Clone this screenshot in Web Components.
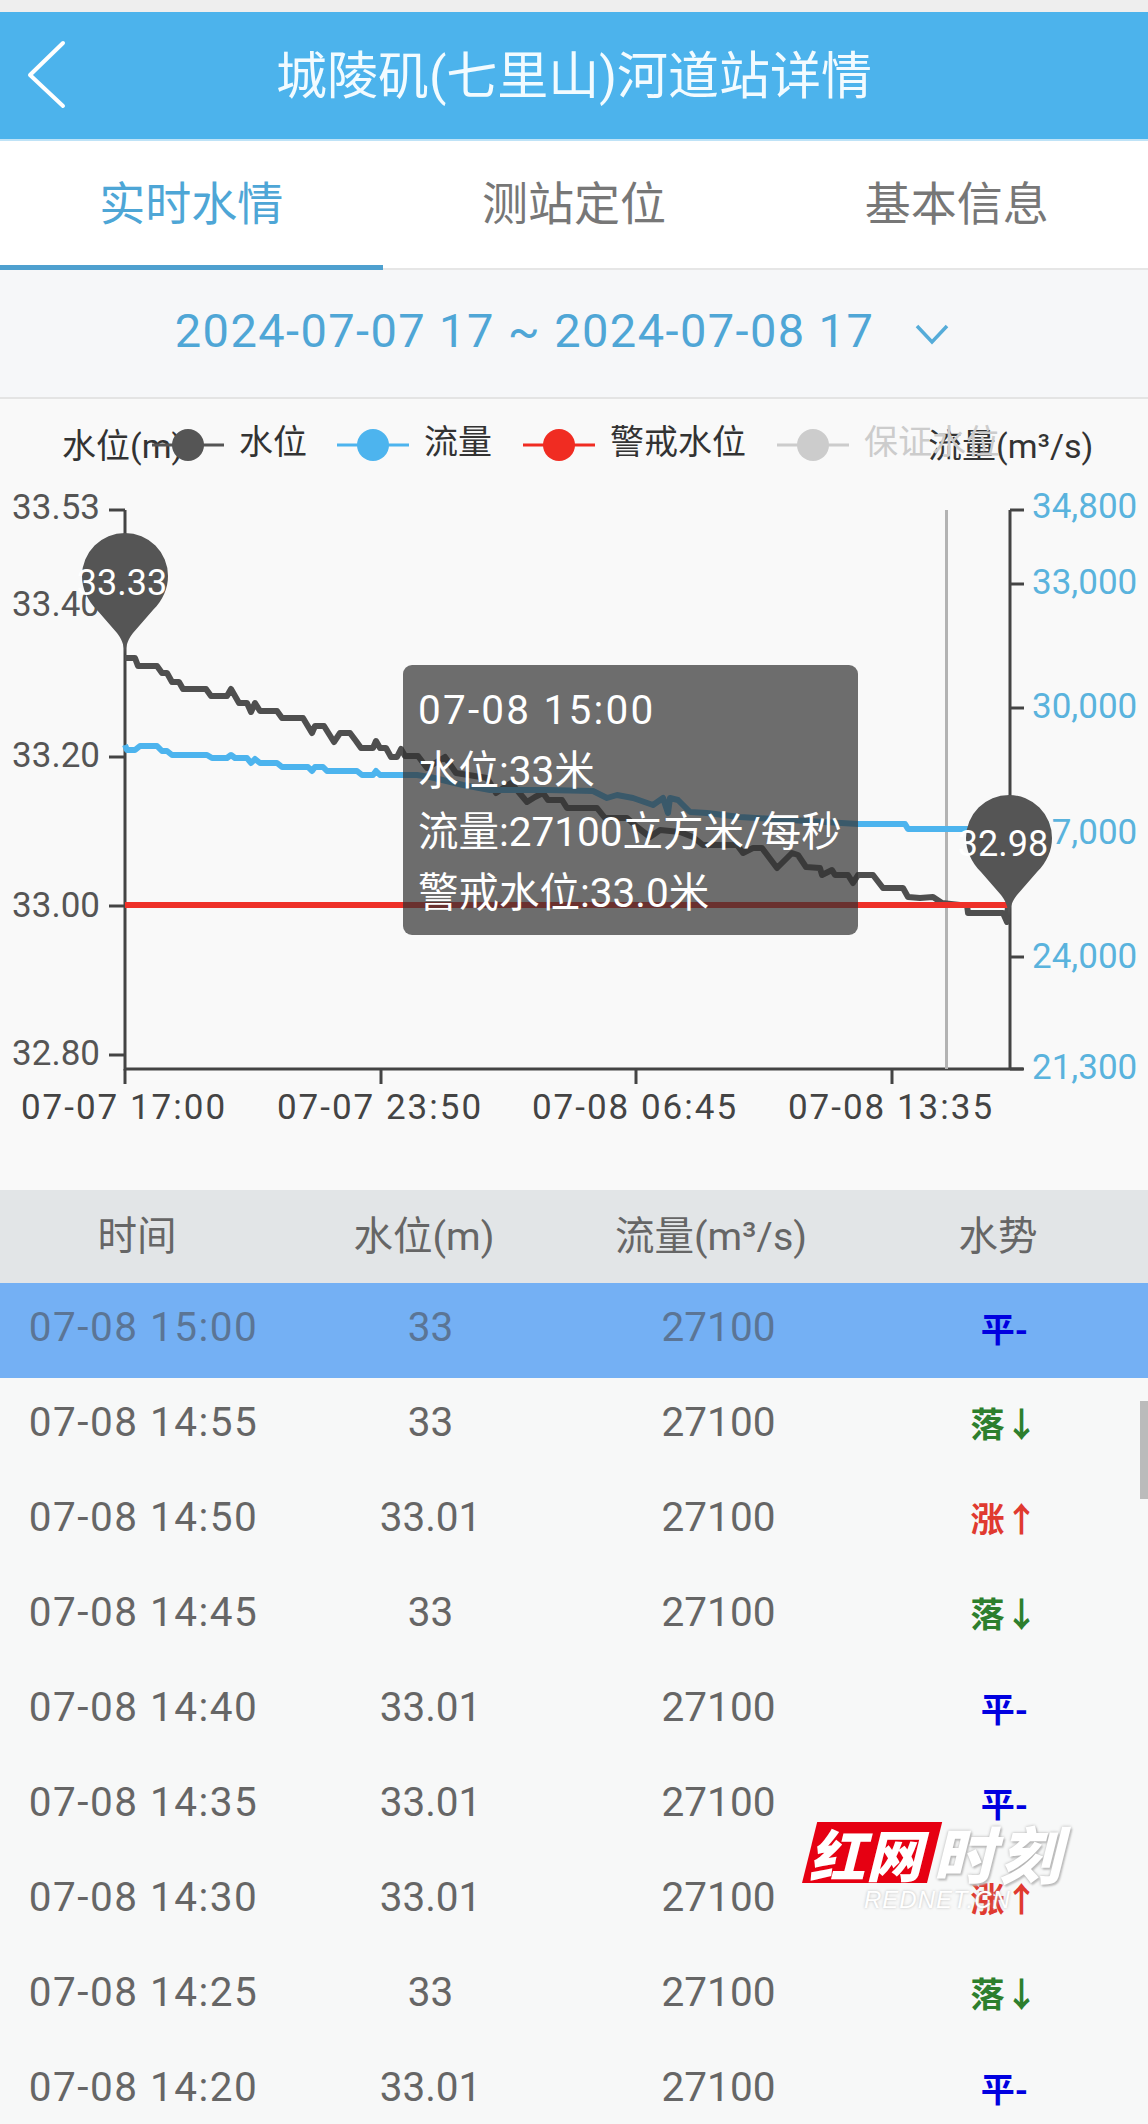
<!DOCTYPE html>
<html lang="zh">
<head>
<meta charset="utf-8">
<title>城陵矶(七里山)河道站详情</title>
<style>
  html, body {
    margin: 0;
    height: 2124px;
    overflow: hidden;
    background: #f8f8f9;
    font-family: Roboto, "Noto Sans CJK SC", sans-serif;
  }
  body {
    position: relative;
    padding-top: 12px;
    box-sizing: border-box;
    background: #f8f8f9;
  }
  .status { position: absolute; top: 0; left: 0; right: 0; height: 12px; background: #eeeeee; }
</style>
</head>
<body>
<div class="status"></div>
<rs-app-bar>城陵矶(七里山)河道站详情</rs-app-bar>
<rs-tabs>
  <rs-tab active>实时水情</rs-tab>
  <rs-tab>测站定位</rs-tab>
  <rs-tab>基本信息</rs-tab>
</rs-tabs>
<rs-date-range>2024-07-07 17 ~ 2024-07-08 17</rs-date-range>
<rs-water-chart></rs-water-chart>
<rs-table>
  <rs-row time="07-08 15:00" level="33" flow="27100" trend="flat" active></rs-row>
  <rs-row time="07-08 14:55" level="33" flow="27100" trend="down"></rs-row>
  <rs-row time="07-08 14:50" level="33.01" flow="27100" trend="up"></rs-row>
  <rs-row time="07-08 14:45" level="33" flow="27100" trend="down"></rs-row>
  <rs-row time="07-08 14:40" level="33.01" flow="27100" trend="flat"></rs-row>
  <rs-row time="07-08 14:35" level="33.01" flow="27100" trend="flat"></rs-row>
  <rs-row time="07-08 14:30" level="33.01" flow="27100" trend="up"></rs-row>
  <rs-row time="07-08 14:25" level="33" flow="27100" trend="down"></rs-row>
  <rs-row time="07-08 14:20" level="33.01" flow="27100" trend="flat"></rs-row>
</rs-table>
<rs-watermark></rs-watermark>

<script>
const FONT = 'Roboto, "Noto Sans CJK SC", sans-serif'

window.customElements.define('rs-app-bar', class extends HTMLElement {
  constructor() {
    super()
    this.attachShadow({ mode: 'open' })
    this.shadowRoot.innerHTML = `
      <style>
        :host {
          display: flex;
          position: relative;
          height: 127px;
          align-items: center;
          justify-content: center;
          background: #4cb3ec;
          border-bottom: 2px solid #bfe3f7;
          color: #f2fbff;
          font: 51px ${FONT};
        }
        svg { position: absolute; left: 24px; top: 26px; }
        .title { margin-top: -7px; }
      </style>
      <svg width="44" height="72" viewBox="0 0 44 72">
        <path d="M39 5 L6 37 L39 68" fill="none" stroke="#fff" stroke-width="4" stroke-linecap="round" stroke-linejoin="round"/>
      </svg>
      <div class="title"><slot></slot></div>`
  }
})

window.customElements.define('rs-tabs', class extends HTMLElement {
  constructor() {
    super()
    this.attachShadow({ mode: 'open' })
    this.shadowRoot.innerHTML = `
      <style>
        :host {
          display: grid;
          grid-template-columns: repeat(3, 1fr);
          height: 129px;
          box-sizing: border-box;
          background: #fff;
          border-bottom: 2px solid #e6e6e6;
        }
      </style>
      <slot></slot>`
  }
})

window.customElements.define('rs-tab', class extends HTMLElement {
  constructor() {
    super()
    this.attachShadow({ mode: 'open' })
    this.shadowRoot.innerHTML = `
      <style>
        :host {
          display: flex;
          align-items: center;
          justify-content: center;
          height: 129px;
          box-sizing: border-box;
          padding-bottom: 12px;
          color: #777;
          font: 46px ${FONT};
        }
        :host([active]) {
          color: #4ea6d6;
          border-bottom: 5px solid #4ea0cf;
          padding-bottom: 7px;
        }
      </style>
      <slot></slot>`
  }
})

window.customElements.define('rs-date-range', class extends HTMLElement {
  constructor() {
    super()
    this.attachShadow({ mode: 'open' })
    this.shadowRoot.innerHTML = `
      <style>
        :host {
          display: flex;
          height: 129px;
          box-sizing: border-box;
          padding: 0 0 6px 0;
          align-items: center;
          justify-content: center;
          background: #f6f7f9;
          border-bottom: 2px solid #e4e4e4;
          color: #4fa6d6;
          font: 47px ${FONT};
          letter-spacing: 1.4px;
        }
        svg { margin-top: 6px; margin-left: 41px; margin-right: -12px; }
        .t { margin-left: -36px; }
      </style>
      <div class="t"><slot></slot></div>
      <svg width="34" height="22" viewBox="0 0 34 22">
        <path d="M2 3 L17 19 L32 3" fill="none" stroke="#55acd9" stroke-width="3.5"/>
      </svg>`
  }
})

// measured points of the two series, in page coordinates
const LEVEL = '125,658 135,658 138,666 157,666 162,673 167,673 172,682 179,682 183,689 206,689 211,696 227,696 231,689 235,696 239,703 247,703 251,712 255,703 260,711 277,711 282,718 303,718 312,733 315,726 324,726 334,742 340,733 350,733 356,741 361,748 373,748 376,741 380,748 386,748 391,757 397,757 401,749 405,756 418,756 427,768 445,757 456,773 487,778 496,793 511,783 527,802 535,797 543,793 548,800 562,800 567,808 597,808 605,818 627,818 637,827 650,837 660,830 680,832 693,837 703,845 737,845 743,853 753,848 762,848 777,868 792,853 798,855 806,867 820,868 822,875 832,870 835,875 848,875 853,883 858,875 873,875 883,888 903,888 908,897 920,898 933,897 942,903 960,905 967,905 968,913 1003,913 1007,922 1008,905'
const FLOW = '125,745 127,750 135,750 140,746 157,746 162,751 167,751 172,755 207,755 212,758 227,758 231,755 235,758 247,758 251,763 255,759 260,763 277,763 282,767 308,767 312,771 315,767 323,767 327,771 357,771 362,775 373,775 376,771 380,775 417,775 430,777 463,785 490,790 547,790 593,791 607,798 617,795 633,798 653,805 663,798 668,813 670,798 678,800 690,812 707,813 740,817 858,824 905,824 908,829 1003,829'
const PIN = 'M0,79 C-1,68 -4,62 -8,57 L-28,34 C-38,24 -43,12 -43,0 A43,43 0 0 1 43,0 C43,12 38,24 28,34 L8,57 C4,62 1,68 0,79 Z'

window.customElements.define('rs-water-chart', class extends HTMLElement {
  constructor() {
    super()
    this.attachShadow({ mode: 'open' })
    this.render()
  }

  legend(cx, color, label, textX, textColor) {
    return `
      <line x1="${cx - 36}" x2="${cx + 36}" y1="445" y2="445" stroke="${color}" stroke-width="3"/>
      <circle cx="${cx}" cy="445" r="16" fill="${color}"/>
      <text x="${textX}" y="454" class="legend" fill="${textColor}">${label}</text>`
  }

  render() {
    const left = [['33.53', 507], ['33.40', 604], ['33.20', 755], ['33.00', 905], ['32.80', 1053]]
      .map(([t, y]) => `<text x="100" y="${y + 12}" class="num" text-anchor="end" fill="#555">${t}</text>`).join('')
    const right = [['34,800', 506], ['33,000', 582], ['30,000', 706], ['27,000', 832], ['24,000', 956], ['21,300', 1067]]
      .map(([t, y]) => `<text x="1032" y="${y + 12}" class="num" fill="#5ab3dd">${t}</text>`).join('')
    const leftTicks = [510, 757, 906, 1055]
      .map(y => `<line x1="109" x2="125" y1="${y}" y2="${y}"/>`).join('')
    const rightTicks = [510, 584, 708, 832, 957, 1069]
      .map(y => `<line x1="1010" x2="1024" y1="${y}" y2="${y}"/>`).join('')
    const xTicks = [[125, '07-07 17:00'], [381, '07-07 23:50'], [636, '07-08 06:45'], [892, '07-08 13:35']]
    const bottom = xTicks.map(([x]) => `<line x1="${x}" x2="${x}" y1="1069" y2="1084"/>`).join('')
    const xLabels = xTicks.map(([x, t]) => `<text x="${x - 1}" y="1119" class="time" text-anchor="middle" fill="#444">${t}</text>`).join('')

    this.shadowRoot.innerHTML = `
      <style>
        :host { display: block; position: relative; height: 791px; background: #f9f9f9; }
        svg { display: block; }
        text { font-family: ${FONT}; }
        .num { font-size: 35px; }
        .time { font-size: 35px; letter-spacing: 2px; }
        .legend { font-size: 34px; }
        .name { font-size: 34px; fill: #333; }
        .pinlabel { font-size: 36px; fill: #fff; }
        .axis line, .axis path { stroke: #444; stroke-width: 3; fill: none; }
        .tip {
          position: absolute;
          left: 403px;
          top: 266px;
          width: 455px;
          height: 270px;
          box-sizing: border-box;
          padding: 15px 15px;
          border-radius: 9px;
          background: rgba(50, 50, 50, .7);
          color: #fff;
          font: 40.5px/61px ${FONT};
          white-space: nowrap;
        }
        .tip .stamp { letter-spacing: 2.2px; }
      </style>
      <svg width="1148" height="791" viewBox="0 399 1148 791">
        <text x="62" y="458" class="name">水位(m)</text>
        <text x="928" y="458" class="name">流量(m³/s)</text>
        ${this.legend(188, '#555', '水位', 239, '#333')}
        ${this.legend(373, '#4db4ee', '流量', 424, '#333')}
        ${this.legend(559, '#f02c22', '警戒水位', 610, '#333')}
        ${this.legend(813, '#cccccc', '保证水位', 864, '#cccccc')}
        <g class="axis">
          <path d="M125 510 V1069 H1023 M1010 510 V1069"/>
          ${leftTicks}${rightTicks}${bottom}
        </g>
        ${left}${right}${xLabels}
        <line x1="946.5" x2="946.5" y1="510" y2="1069" stroke="#b3b3b3" stroke-width="3"/>
        <polyline points="${LEVEL}" fill="none" stroke="#4f4f4f" stroke-width="6" stroke-linejoin="round"/>
        <polyline points="${FLOW}" fill="none" stroke="#4db4ee" stroke-width="6" stroke-linejoin="round"/>
        <line x1="125" x2="1010" y1="905" y2="905" stroke="#ee3028" stroke-width="6"/>
        <path d="${PIN}" transform="translate(125,576)" fill="#555"/>
        <path d="${PIN}" transform="translate(1009,838)" fill="#555"/>
        <text x="122" y="595" class="pinlabel" text-anchor="middle">33.33</text>
        <text x="1003" y="856" class="pinlabel" text-anchor="middle">32.98</text>
      </svg>
      <div class="tip">
        <div class="stamp">07-08 15:00</div>
        <div>水位:33米</div>
        <div>流量:27100立方米/每秒</div>
        <div>警戒水位:33.0米</div>
      </div>`
  }
})

window.customElements.define('rs-table', class extends HTMLElement {
  constructor() {
    super()
    this.attachShadow({ mode: 'open' })
    this.shadowRoot.innerHTML = `
      <style>
        :host { display: block; position: relative; background: #f7f8f8; }
        .head {
          display: grid;
          grid-template-columns: repeat(4, 1fr);
          height: 93px;
          padding-bottom: 9px;
          box-sizing: border-box;
          align-items: center;
          background: #e2e5e7;
          color: #666;
          font: 39.5px ${FONT};
          text-align: center;
        }
        .head div { padding-right: 13px; }
        .bar {
          position: absolute;
          top: 211px;
          right: 0;
          width: 8px;
          height: 98px;
          background: #bbbbbb;
        }
      </style>
      <div class="head">
        <div>时间</div>
        <div>水位(m)</div>
        <div>流量(m³/s)</div>
        <div>水势</div>
      </div>
      <slot></slot>
      <div class="bar"></div>`
  }
})

const TRENDS = {
  flat: { label: '平-', color: '#0000e0' },
  down: { label: '落↓', color: '#2d7f2d' },
  up: { label: '涨↑', color: '#e03a30' }
}

window.customElements.define('rs-row', class extends HTMLElement {
  constructor() {
    super()
    this.attachShadow({ mode: 'open' })
  }

  connectedCallback() {
    const trend = TRENDS[this.getAttribute('trend')]
    this.shadowRoot.innerHTML = `
      <style>
        :host {
          display: grid;
          grid-template-columns: repeat(4, 1fr);
          height: 95px;
          padding-bottom: 7px;
          box-sizing: border-box;
          align-items: center;
          color: #666;
          font: 40.5px ${FONT};
          text-align: center;
        }
        :host([active]) { background: #74b0f4; color: #5b7595; }
        .time { letter-spacing: 1.5px; }
        .flow { padding-left: 2px; }
        .trend { font-size: 34px; font-weight: 700; color: ${trend.color}; }
      </style>
      <div class="time">${this.getAttribute('time')}</div>
      <div>${this.getAttribute('level')}</div>
      <div class="flow">${this.getAttribute('flow')}</div>
      <div class="trend">${trend.label}</div>`
  }
})

window.customElements.define('rs-watermark', class extends HTMLElement {
  constructor() {
    super()
    this.attachShadow({ mode: 'open' })
    this.shadowRoot.innerHTML = `
      <style>
        :host {
          display: block;
          position: absolute;
          left: 802px;
          top: 1822px;
          width: 270px;
          height: 90px;
          font-family: "Noto Sans CJK SC", sans-serif;
        }
        .logo {
          display: flex;
          height: 61px;
          align-items: center;
          transform: skewX(-14deg);
          transform-origin: 0 100%;
        }
        .red {
          width: 125px;
          height: 61px;
          background: #e60012;
          color: #fff;
          font-size: 56px;
          font-weight: 900;
          line-height: 61px;
          text-align: center;
          letter-spacing: 1px;
        }
        .now {
          margin-left: 5px;
          color: #fff;
          font-size: 62px;
          font-weight: 900;
          line-height: 61px;
          letter-spacing: 4px;
          text-shadow: 0 0 3px #aaa, 2px 2px 2px #c4c4c4;
        }
        .net {
          position: absolute;
          left: 62px;
          top: 64px;
          color: #fff;
          font: italic 24px "Liberation Sans", sans-serif;
          text-shadow: 0 0 3px #bbb;
          letter-spacing: 1px;
        }
      </style>
      <div class="logo">
        <div class="red">红网</div>
        <div class="now">时刻</div>
      </div>
      <div class="net">REDNET.CN</div>`
  }
})
</script>
</body>
</html>
